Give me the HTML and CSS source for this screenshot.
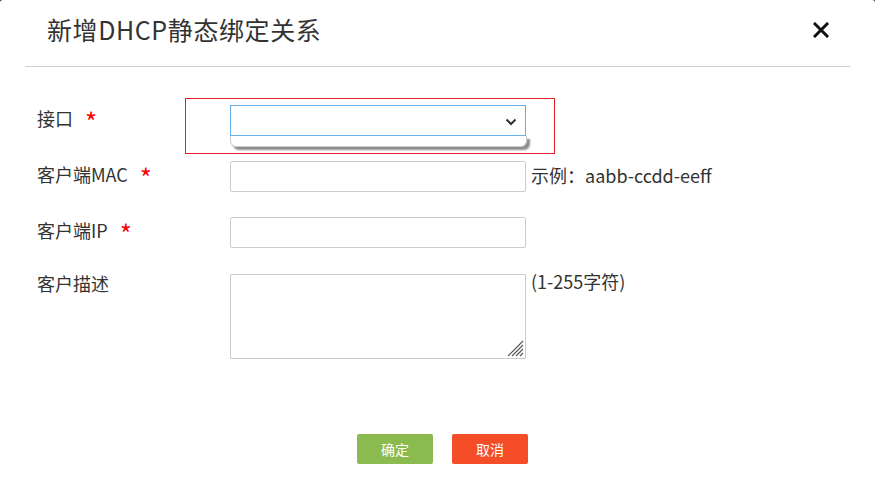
FILE: index.html
```html
<!DOCTYPE html>
<html lang="zh-CN">
<head>
<meta charset="utf-8">
<title>新增DHCP静态绑定关系</title>
<link rel="stylesheet" href="styles.css">
</head>
<body>
<div class="dialog">
  <div class="header">
    <h1 class="title">新增DHCP静态绑定关系</h1>
    <span class="close">
      <svg width="16" height="16" viewBox="0 0 16 16"><path d="M2 2 L14 14 M14 2 L2 14" stroke="#111" stroke-width="3" stroke-linecap="square"/></svg>
    </span>
  </div>
  <div class="form">
    <div class="row">
      <label class="label">接口<span class="req">*</span></label>
      <div class="field select-wrap">
        <div class="select">
          <svg class="chev" width="12" height="8" viewBox="0 0 12 8"><path d="M1.5 1.5 L6 6 L10.5 1.5" fill="none" stroke="#333" stroke-width="2"/></svg>
        </div>
        <div class="dropdown"></div>
        <div class="highlight"></div>
      </div>
    </div>
    <div class="row">
      <label class="label">客户端MAC<span class="req">*</span></label>
      <div class="field"><input class="input" type="text"></div>
      <span class="hint">示例：aabb-ccdd-eeff</span>
    </div>
    <div class="row">
      <label class="label">客户端IP<span class="req">*</span></label>
      <div class="field"><input class="input" type="text"></div>
    </div>
    <div class="row">
      <label class="label">客户描述</label>
      <div class="field">
        <textarea class="textarea"></textarea>
        <svg class="grip" width="17" height="17" viewBox="0 0 17 17"><path d="M16 1 L1 16 M16 5 L5 16 M16 9 L9 16 M16 13 L13 16" stroke="#555" stroke-width="1.1"/></svg>
      </div>
      <span class="hint hint-small">(1-255字符)</span>
    </div>
  </div>
  <div class="actions">
    <button class="btn btn-ok">确定</button>
    <button class="btn btn-cancel">取消</button>
  </div>
</div>
</body>
</html>
```
FILE: styles.css
```css
html {
  background: #4a4a4a;
}
body {
  margin: 0;
  font-family: "Noto Sans CJK SC", "Noto Sans", sans-serif;
  color: #333;
}
.dialog {
  width: 875px;
  height: 502px;
  background: #fff;
  border-radius: 3px 3px 0 0;
  box-sizing: border-box;
}
.header {
  margin: 0 25px;
  height: 66px;
  border-bottom: 1px solid #cfcfcf;
  display: flex;
  align-items: center;
  justify-content: space-between;
  padding: 0 21px 0 22px;
  box-sizing: content-box;
}
.title {
  margin: 0;
  font-weight: normal;
  font-size: 25px;
  line-height: 30px;
  color: #333;
  letter-spacing: 0.6px;
  position: relative;
  top: -4px;
}
.close {
  display: flex;
  position: relative;
  top: -3px;
}
.form {
  padding: 38px 0 0 37px;
  display: flex;
  flex-direction: column;
  gap: 25px;
}
.row {
  display: flex;
  align-items: flex-start;
}
.label {
  width: 193px;
  flex: none;
  font-size: 18px;
  line-height: 22px;
  margin-top: -1px;
  color: #333;
}
.req {
  color: #f00;
  margin-left: 12px;
  font-size: 26px;
  line-height: 22px;
  position: relative;
  top: 6px;
}
.field {
  position: relative;
  width: 296px;
}
.select {
  height: 31px;
  box-sizing: border-box;
  border: 1px solid #66aee6;
  background: #fff;
  position: relative;
}
.chev {
  position: absolute;
  right: 8px;
  top: 12px;
}
.dropdown {
  position: absolute;
  left: 0;
  top: 31px;
  width: 297px;
  height: 11px;
  box-sizing: border-box;
  border: 1px solid #ccc;
  border-top: none;
  border-radius: 0 0 6px 6px;
  background: #fff;
  box-shadow: 3px 3px 2px rgba(0, 0, 0, 0.45);
}
.highlight {
  position: absolute;
  left: -45px;
  top: -7px;
  width: 370px;
  height: 56px;
  box-sizing: border-box;
  border: 1px solid #e2202a;
  pointer-events: none;
}
.input {
  display: block;
  width: 296px;
  height: 31px;
  box-sizing: border-box;
  border: 1px solid #ccc;
  border-radius: 2px;
  margin: 0;
  padding: 0 6px;
  outline: none;
}
.textarea {
  display: block;
  width: 296px;
  height: 85px;
  box-sizing: border-box;
  border: 1px solid #ccc;
  border-radius: 1px;
  margin: 1px 0 0;
  padding: 4px;
  outline: none;
  resize: none;
}
.grip {
  position: absolute;
  right: 2px;
  bottom: 2px;
}
.hint {
  font-size: 18px;
  line-height: 22px;
  margin-left: 5px;
  margin-top: 3px;
  color: #333;
}
.hint-small {
  margin-top: -3px;
}
.actions {
  display: flex;
  justify-content: center;
  gap: 19px;
  margin-top: 75px;
  padding-left: 10px;
}
.btn {
  width: 76px;
  height: 30px;
  border: none;
  border-radius: 2px;
  color: #fff;
  font-family: "Noto Sans CJK SC", sans-serif;
  font-size: 14px;
  padding: 0;
}
.btn-ok {
  background: #8bbb4f;
}
.btn-cancel {
  background: #f44d27;
}
```
